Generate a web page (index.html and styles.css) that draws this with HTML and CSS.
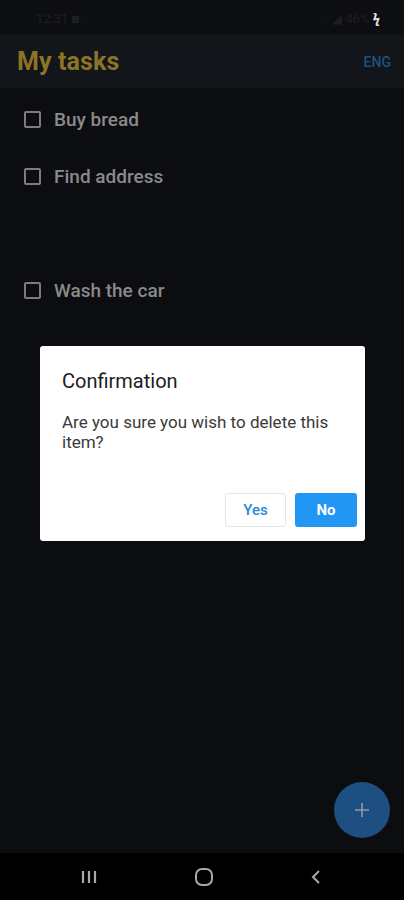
FILE: index.html
```html
<!DOCTYPE html>
<html lang="en">
<head>
    <meta charset="UTF-8">
    <meta name="viewport" content="width=device-width, initial-scale=1.0">
    <title>My tasks</title>
    <link rel="stylesheet" href="styles.css">
</head>
<body>
    <div class="screen">
        <div class="status-bar">
            <span class="status-left">12:31 <span class="dot-sq"></span> ◌</span>
            <span class="status-right">◌ ◢ 46% <span class="bolt">ϟ</span></span>
        </div>
        <header class="app-bar">
            <h1 class="title">My tasks</h1>
            <span class="lang">ENG</span>
        </header>
        <main class="task-list">
            <div class="task"><span class="check"></span><span class="task-text">Buy bread</span></div>
            <div class="task"><span class="check"></span><span class="task-text">Find address</span></div>
            <div class="task task-empty"></div>
            <div class="task"><span class="check"></span><span class="task-text">Wash the car</span></div>
        </main>

        <div class="dialog">
            <div class="dialog-title">Confirmation</div>
            <div class="dialog-body">Are you sure you wish to delete this item?</div>
            <div class="dialog-actions">
                <button class="btn btn-yes">Yes</button>
                <button class="btn btn-no">No</button>
            </div>
        </div>

        <div class="fab">
            <svg width="18" height="18" viewBox="0 0 18 18"><path d="M9 2v14M2 9h14" stroke="#8e9aa8" stroke-width="1.6"/></svg>
        </div>

        <nav class="nav-bar">
            <svg width="16" height="14" viewBox="0 0 16 14"><path d="M2 1v12M8 1v12M14 1v12" stroke="#a8a8a8" stroke-width="2.2"/></svg>
            <svg width="20" height="20" viewBox="0 0 20 20"><rect x="2" y="2" width="16" height="16" rx="6" fill="none" stroke="#a8a8a8" stroke-width="2"/></svg>
            <svg width="12" height="16" viewBox="0 0 12 16"><path d="M9 2L3 8l6 6" fill="none" stroke="#a8a8a8" stroke-width="2"/></svg>
        </nav>
    </div>
</body>
</html>
```

FILE: styles.css
```css
body {
    margin: 0;
    background-color: #0c0d10;
    font-family: Roboto, 'Noto Sans', sans-serif;
}
.screen {
    position: relative;
    width: 404px;
    height: 900px;
    display: flex;
    flex-direction: column;
    background-color: #0c0d10;
    overflow: hidden;
}
.status-bar {
    height: 35px;
    display: flex;
    justify-content: space-between;
    align-items: center;
    padding: 0 24px 0 36px;
    background-color: #0d0e11;
    color: #1d1f22;
    font-size: 13px;
}
.dot-sq {
    display: inline-block;
    width: 7px;
    height: 7px;
    background-color: #1d1f22;
}
.bolt {
    color: #e8e8e8;
    font-weight: bold;
}
.app-bar {
    height: 53px;
    display: flex;
    justify-content: space-between;
    align-items: center;
    padding: 0 13px 0 17px;
    background-color: #121519;
}
.title {
    margin: 0;
    font-size: 25px;
    font-weight: 700;
    color: #8c7426;
    letter-spacing: 0.1px;
}
.lang {
    font-size: 14px;
    font-weight: 500;
    color: #20507e;
}
.task-list {
    flex: 1;
    padding: 3px 24px 0;
}
.task {
    height: 57px;
    display: flex;
    align-items: center;
    gap: 13px;
}
.check {
    width: 13px;
    height: 13px;
    border: 2px solid #7c7c7c;
    border-radius: 2px;
}
.task-text {
    font-size: 19px;
    font-weight: 500;
    color: #8a8a8a;
}
.dialog {
    position: absolute;
    left: 40px;
    top: 346px;
    width: 325px;
    height: 195px;
    box-sizing: border-box;
    background-color: #fff;
    border-radius: 3px;
    padding: 22px 8px 14px 22px;
    display: flex;
    flex-direction: column;
}
.dialog-title {
    font-size: 20px;
    color: #1c1c1c;
    line-height: 26px;
}
.dialog-body {
    margin-top: 18px;
    padding-right: 10px;
    font-size: 17px;
    line-height: 20px;
    color: #3a3a3a;
}
.dialog-actions {
    margin-top: auto;
    display: flex;
    justify-content: flex-end;
    gap: 9px;
}
.btn {
    height: 34px;
    border-radius: 3px;
    font-family: Roboto, sans-serif;
    font-size: 15px;
    font-weight: 500;
    cursor: pointer;
}
.btn-yes {
    width: 61px;
    background-color: #fff;
    border: 1px solid #e6e6e6;
    color: #2b8ad8;
}
.btn-no {
    width: 62px;
    background-color: #2196f3;
    border: none;
    color: #fff;
    font-weight: 700;
}
.fab {
    position: absolute;
    left: 334px;
    top: 782px;
    width: 56px;
    height: 56px;
    border-radius: 50%;
    background-color: #1d4f82;
    display: flex;
    align-items: center;
    justify-content: center;
}
.nav-bar {
    height: 47px;
    background-color: #000;
    display: flex;
    justify-content: space-between;
    align-items: center;
    padding: 0 82px 0 81px;
}
```
